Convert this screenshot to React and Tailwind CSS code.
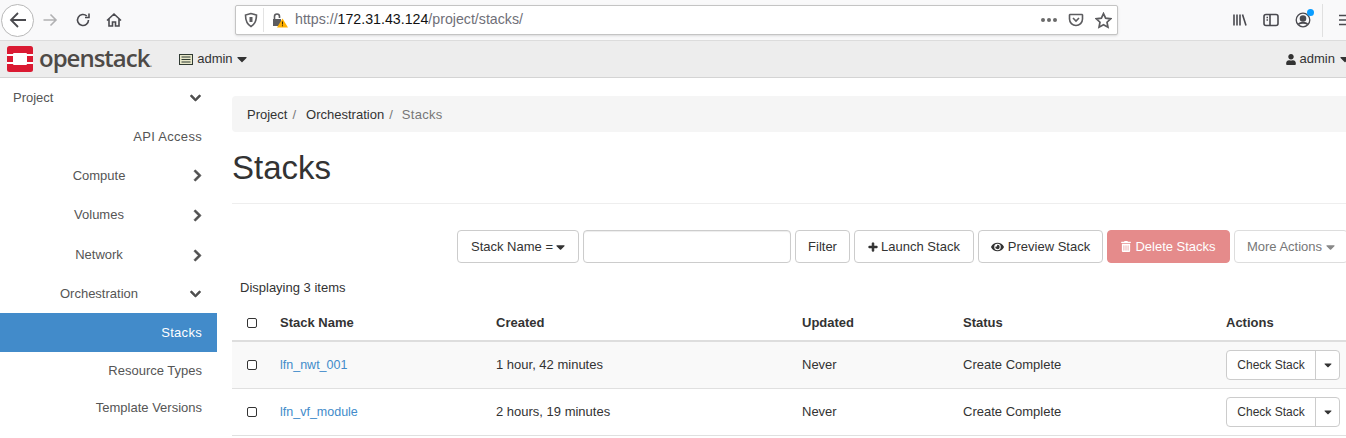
import React from 'react';
import { FaCaretDown, FaChevronDown, FaChevronRight, FaEye, FaPlus, FaTrashAlt, FaUser } from 'react-icons/fa';

const ToolIcon = ({ children, className = '' }) => (
    <svg viewBox="0 0 16 16" fill="none" stroke="currentColor" strokeWidth="1.6" className={`w-4 h-4 ${className}`}>
        {children}
    </svg>
);

const BrowserBar = () => (
    <div className="h-[41px] bg-[#f9f9fa] border-b border-[#dcdcdc] flex items-center text-[#4a4a4f]">
        <div className="ml-[1px] w-[33px] h-[33px] rounded-full border border-[#b8b8b8] bg-white flex items-center justify-center">
            <svg viewBox="0 0 18 18" fill="none" stroke="currentColor" strokeWidth="1.8" className="w-[18px] h-[18px]">
                <path d="M17 9H2M9 2 2 9l7 7" />
            </svg>
        </div>
        <ToolIcon className="ml-[8px] text-[#b1b1b3]"><path d="M1.5 8H14M8.5 2.5 14 8l-5.500 5.500" /></ToolIcon>
        <ToolIcon className="ml-[17px]"><path d="M13.500 8a5.500 5.500 0 1 1-1.700-4M14 1.500V5.500H10" /></ToolIcon>
        <ToolIcon className="ml-[15px]"><path d="M1 8.500 8 2l7 6.500M3 7v7h3.500v-4h3v4H13V7" /></ToolIcon>
        <div className="ml-[113px] w-[883px] h-[30px] bg-white border border-[#c4c4c4] rounded-[2px] flex items-center shadow-sm">
            <ToolIcon className="ml-[7px] text-[#5c5c5f]"><path d="M8 1.500 2.500 3c0 5.500 1 9 5.500 11.500C12.500 12 13.500 8.500 13.500 3z" /><path d="M8 5v5" strokeWidth="3" /></ToolIcon>
            <div className="ml-[4px] w-px h-[24px] bg-[#e3e3e3]" />
            <div className="ml-[8px] relative w-[16px] h-[16px]">
                <svg viewBox="0 0 16 16" className="w-4 h-4 text-[#5c5c5f]" fill="currentColor">
                    <path d="M1 7h8v7H1z" />
                    <path d="M2.500 7V4.500a2.500 2.500 0 0 1 5 0V6" fill="none" stroke="currentColor" strokeWidth="1.600" />
                    <path d="M10.500 6.500 16 15.500H5z" fill="#ffb000" />
                    <path d="M10 9.500h1v3h-1zM10 13.200h1v1h-1z" fill="#3a2a00" />
                </svg>
            </div>
            <div className="ml-[7px] text-[14.2px] text-[#6f6f78]">
                https://<span className="text-[#111]">172.31.43.124</span>/project/stacks/
            </div>
            <div className="ml-auto flex items-center text-[#5c5c5f]">
                <div className="flex gap-[2px] mr-[11px]">
                    <div className="w-[4px] h-[4px] rounded-full bg-[#6a6a6a]" />
                    <div className="w-[4px] h-[4px] rounded-full bg-[#6a6a6a]" />
                    <div className="w-[4px] h-[4px] rounded-full bg-[#6a6a6a]" />
                </div>
                <ToolIcon className="mr-[11px]"><path d="M2 2.500h12a.800.800 0 0 1 .500.500v4a6.500 6.500 0 0 1-13 0V3a.800.800 0 0 1 .500-.500z" /><path d="m5 6 3 3 3-3" /></ToolIcon>
                <svg viewBox="0 0 16 16" fill="none" stroke="currentColor" strokeWidth="1.600" className="w-[17px] h-[17px] mr-[5px]">
                    <path d="m8 1.500 2 4.300 4.700.600-3.400 3.200.900 4.700L8 12l-4.200 2.300.900-4.700L1.300 6.400 6 5.800z" />
                </svg>
            </div>
        </div>
        <div className="ml-auto flex items-center">
            <ToolIcon className="mr-[15px]"><path d="M2 2.500v11M5 2.500v11M8 2.500v11M10.500 2.500l3.500 11" /></ToolIcon>
            <ToolIcon className="mr-[16px]"><rect x="1" y="2.500" width="14" height="11" rx="2" /><path d="M7 2.500v11M3.500 5.500H5M3.500 8H5" /></ToolIcon>
            <div className="relative mr-[11px]">
                <ToolIcon><circle cx="8" cy="8" r="6.800" strokeWidth="1.300" /><circle cx="8" cy="6.500" r="2.500" fill="currentColor" /><path d="M3.500 12.500c1-2.500 8-2.500 9 0" strokeWidth="2" /></ToolIcon>
                <div className="absolute -top-[3px] -right-[3px] w-[7px] h-[7px] rounded-full bg-[#0a9dff]" />
            </div>
            <div className="w-px h-[33px] bg-[#e0e0e0] mr-[15px]" />
            <div className="w-[8px] overflow-hidden">
                <ToolIcon><path d="M1 3.500h14M1 8h14M1 12.500h14" /></ToolIcon>
            </div>
        </div>
    </div>
);

const NavBar = () => (
    <div className="h-[37px] bg-[#ededed] border-b border-[#d4d4d4] flex items-center text-[#333]">
        <svg viewBox="0 0 26 26" className="ml-[7px] w-[26px] h-[26px]">
            <rect width="26" height="26" rx="2.500" fill="#da1a32" />
            <rect x="6" y="7" width="14" height="12" rx="1" fill="#fff" />
            <path d="M0 8h6v2H0zM20 8h6v2h-6zM0 16h6v2H0zM20 16h6v2h-6z" fill="#fff" />
        </svg>
        <div className="ml-[6px] font-['Open_Sans',sans-serif] font-semibold text-[24px] tracking-[-1px] text-[#4e4a47] leading-none -mt-[2px]">
            openstack<span className="text-[10px] text-[#8a8a8a]">.</span>
        </div>
        <svg viewBox="0 0 14 11" className="ml-[28px] w-[14px] h-[11px]">
            <rect x="0.500" y="0.500" width="13" height="10" fill="#e7e7c9" stroke="#2f3a32" />
            <path d="M2.500 3h9M2.500 5.500h9M2.500 8h9" stroke="#2f3a32" />
        </svg>
        <span className="ml-[4px] text-[13px]">admin</span>
        <FaCaretDown className="ml-[4px] w-[10px] h-[16px]" />
        <div className="ml-auto flex items-center -mr-[4px]">
            <FaUser className="w-[10px] h-[11px]" />
            <span className="ml-[4px] text-[13px]">admin</span>
            <FaCaretDown className="ml-[5px] w-[10px] h-[16px]" />
        </div>
    </div>
);

const SideRow = ({ label, icon, active, height = 'h-[39px]', textClass = '' }) => (
    <div className={`${height} flex items-center ${active ? 'bg-[#428bca] text-white' : 'text-[#555]'}`}>
        {icon ? (
            <>
                <span className="w-[198px] text-center">{label}</span>
                <span className="text-[#4f4f4f]">{icon}</span>
            </>
        ) : (
            <span className={`w-[202px] text-right ${textClass}`}>{label}</span>
        )}
    </div>
);

const rightChevron = <FaChevronRight stroke="currentColor" strokeWidth="30" className="w-[11px] h-[13px] -ml-[6px]" />;
const downChevron = <FaChevronDown stroke="currentColor" strokeWidth="30" className="w-[13px] h-[12px] -ml-[9px]" />;

const Sidebar = () => (
    <div className="w-[217px] shrink-0">
        <div className="h-[39px] flex items-center pl-[13px] text-[#555]">
            <span className="w-[176px]">Project</span>
            <FaChevronDown stroke="currentColor" strokeWidth="30" className="w-[13px] h-[12px] text-[#4f4f4f]" />
        </div>
        <SideRow label="API Access" textClass="tracking-[0.3px]" />
        <SideRow label="Compute" icon={rightChevron} />
        <SideRow label="Volumes" height="h-[40px]" icon={rightChevron} />
        <SideRow label="Network" height="h-[40px]" icon={rightChevron} />
        <SideRow label="Orchestration" height="h-[38px]" icon={downChevron} />
        <SideRow label="Stacks" active textClass="tracking-[0.3px]" />
        <SideRow label="Resource Types" height="h-[38px]" />
        <SideRow label="Template Versions" height="h-[36px]" />
    </div>
);

const Btn = ({ children, className = '' }) => (
    <div className={`h-[33px] shrink-0 border rounded-[4px] flex items-center justify-center whitespace-nowrap ${className}`}>
        {children}
    </div>
);

const Toolbar = () => (
    <div className="mt-[26px] ml-[225px] flex items-center gap-[4px] text-[#333]">
        <Btn className="w-[122px] bg-white border-[#ccc]">Stack Name =<FaCaretDown className="ml-[3px] w-[9px] h-[14px]" /></Btn>
        <div className="w-[208px] h-[33px] shrink-0 border border-[#ccc] rounded-[4px] bg-white shadow-[inset_0_1px_1px_rgba(0,0,0,0.075)]" />
        <Btn className="w-[55px] bg-white border-[#ccc]">Filter</Btn>
        <Btn className="w-[120px] bg-white border-[#ccc]"><FaPlus stroke="currentColor" strokeWidth="30" className="mr-[3px] w-[10px] h-[10px]" />Launch Stack</Btn>
        <Btn className="w-[125px] bg-white border-[#ccc]"><FaEye className="mr-[4px] w-[13px] h-[12px]" />Preview Stack</Btn>
        <Btn className="w-[123px] bg-[#e58b8b] border-[#e58b8b] text-white"><FaTrashAlt className="mr-[4px] w-[10px] h-[11px]" />Delete Stacks</Btn>
        <Btn className="w-[114px] bg-white text-[#777] border-[#ddd]">More Actions<FaCaretDown className="ml-[4px] w-[9px] h-[14px] text-[#888]" /></Btn>
    </div>
);

const Check = () => <div className="w-[10px] h-[10px] border border-[#333] rounded-[2px] bg-white ml-[15px]" />;

const tableCols = 'grid grid-cols-[48px_216px_306px_161px_263px_120px] items-center';

const StackRow = ({ name, created, striped }) => (
    <div className={`${tableCols} h-[47px] border-b border-[#e0e0e0] ${striped ? 'bg-[#f9f9f9]' : ''}`}>
        <Check />
        <a className="text-[#428bca] text-[12.5px]">{name}</a>
        <span>{created}</span>
        <span>Never</span>
        <span>Create Complete</span>
        <div className="flex h-[30px] w-[114px] border border-[#ccc] rounded-[4px] bg-white">
            <span className="w-[89px] border-r border-[#ccc] flex items-center justify-center text-[12px]">Check Stack</span>
            <span className="flex-1 flex items-center justify-center"><FaCaretDown className="w-[8px] h-[12px]" /></span>
        </div>
    </div>
);

export default function App() {
    return (
        <div className="w-[1346px] h-[438px] overflow-hidden bg-white font-['Liberation_Sans',sans-serif] text-[13px] text-[#333]">
            <BrowserBar />
            <NavBar />
            <div className="flex">
                <Sidebar />
                <div className="ml-[15px] flex-1 min-w-0 pt-[18px]">
                    <div className="h-[36px] bg-[#f5f5f5] rounded-l-[4px] flex items-center pt-[1px] pl-[15px] gap-[5px]">
                        <span>Project</span><span className="text-[#777]">/</span>
                        <span className="ml-[5px]">Orchestration</span><span className="text-[#777]">/</span>
                        <span className="ml-[4px] text-[#777] tracking-[0.3px]">Stacks</span>
                    </div>
                    <h1 className="mt-[16px] h-[40px] text-[33px] leading-[40px] text-[#333]">Stacks</h1>
                    <div className="mt-[15px] h-px bg-[#eee]" />
                    <Toolbar />
                    <div className="mt-[17px] ml-[8px] h-[16px] leading-[16px]">Displaying 3 items</div>
                    <div className={`${tableCols} mt-[9px] h-[37px] border-b-2 border-[#dedede] font-bold`}>
                        <Check />
                        <span>Stack Name</span>
                        <span>Created</span>
                        <span>Updated</span>
                        <span>Status</span>
                        <span>Actions</span>
                    </div>
                    <StackRow name="lfn_nwt_001" created="1 hour, 42 minutes" striped />
                    <StackRow name="lfn_vf_module" created="2 hours, 19 minutes" />
                </div>
            </div>
        </div>
    );
}
